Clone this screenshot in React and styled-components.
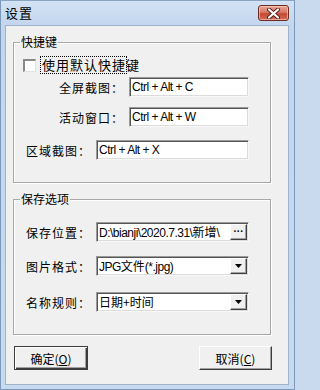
import React from "react";
import styled, { createGlobalStyle } from "styled-components";

const Global = createGlobalStyle`
  html, body { margin: 0; padding: 0; background: #c9daef; }
  #root { width: 295px; height: 390px; }
  * { box-sizing: border-box; }
`;

const CJK = `"Noto Sans CJK SC", "Noto Sans", sans-serif`;
const LATIN = `"Liberation Sans", "Noto Sans CJK SC", sans-serif`;

const Window = styled.div`
  width: 295px;
  height: 390px;
  display: flex;
  flex-direction: column;
  padding: 0 5px 4px 4px;
  background: linear-gradient(#d3e2f4 0px, #c3d6ee 24px, #c8daf0 100%);
  border: 1px solid #7c98bb;
  border-top-color: #8aa4c4;
`;

const TitleBar = styled.div`
  height: 24px;
  display: flex;
  align-items: flex-start;
  justify-content: space-between;
`;

const Title = styled.div`
  font-family: ${CJK};
  font-size: 13px;
  line-height: 13px;
  color: #000;
  padding: 5px 0 0 0;
  letter-spacing: 1px;
`;

const CloseButton = styled.div`
  width: 31px;
  height: 16px;
  margin-top: 4px;
  border: 1px solid #6b2b22;
  border-radius: 3px;
  background: linear-gradient(#e8a593 0%, #d77a66 45%, #c24a36 55%, #d46b55 100%);
  box-shadow: inset 0 0 0 1px rgba(255, 220, 210, 0.55);
  display: flex;
  align-items: center;
  justify-content: center;
`;

const Body = styled.div`
  flex: 1;
  background: #f0f0f0;
  border: 1px solid #9cb2cd;
  padding: 9px 0 0 7px;
  display: flex;
  flex-direction: column;
`;

const Group = styled.fieldset`
  margin: ${(p) => p.$mt || 0}px 0 0 0;
  width: 258px;
  min-width: 0;
  padding: 0 0 ${(p) => p.$pb}px 9px;
  border: 1px solid #a8a8a8;
  box-shadow: inset 1px 1px 0 #fff, 1px 1px 0 #fff;
  display: flex;
  flex-direction: column;
`;

const Legend = styled.legend`
  font-family: ${CJK};
  font-size: 12px;
  line-height: 14px;
  padding: 0 1px;
  margin-left: -3px;
  color: #000;
  background: #f0f0f0;
`;

const CheckRow = styled.label`
  display: flex;
  align-items: center;
  height: 16px;
  margin-top: 8px;
  font-family: ${CJK};
  font-size: 13px;
  letter-spacing: 1px;
  line-height: 16px;
  color: #000;
`;

const CheckBox = styled.span`
  width: 13px;
  height: 13px;
  background: #fff;
  border-top: 2px solid #8a8a8a;
  border-left: 2px solid #8a8a8a;
  border-right: 1px solid #e2e2e2;
  border-bottom: 1px solid #e2e2e2;
  margin-right: 5px;
  flex-shrink: 0;
`;

const Focus = styled.span`
  outline: 1px dotted #000;
  outline-offset: 0;
  padding-left: 1px;
`;

const Row = styled.div`
  display: flex;
  align-items: center;
  justify-content: flex-end;
  padding-right: 21px;
  margin-top: ${(p) => p.$mt}px;
  gap: ${(p) => p.$gap || 5}px;
`;

const Label = styled.span`
  font-family: ${CJK};
  font-size: 12px;
  letter-spacing: 1px;
  color: #000;
  white-space: nowrap;
`;

const Sunken = styled.div`
  width: ${(p) => p.$w}px;
  height: 20px;
  background: #fff;
  border-top: 1px solid #9a9a9a;
  border-left: 1px solid #9a9a9a;
  border-right: 1px solid #f8f8f8;
  border-bottom: 1px solid #f8f8f8;
  box-shadow: inset 1px 1px 0 #555, inset -1px -1px 0 #dcdcdc;
  display: flex;
  align-items: stretch;
  overflow: hidden;
`;

const FieldText = styled.div`
  flex: 1;
  min-width: 0;
  overflow: hidden;
  white-space: nowrap;
  padding: 0 0 0 2px;
  font-family: ${LATIN};
  font-size: 12px;
  letter-spacing: -0.5px;
  line-height: 18px;
  color: #000;
`;

const CjkPart = styled.span`
  font-family: ${CJK};
  letter-spacing: 0;
`;

const SideButton = styled.div`
  width: 17px;
  margin: 1px 1px 1px 0;
  background: #f0f0f0;
  border-top: 1px solid #fff;
  border-left: 1px solid #fff;
  border-right: 1px solid #404040;
  border-bottom: 1px solid #404040;
  box-shadow: inset -1px -1px 0 #a0a0a0;
  display: flex;
  align-items: center;
  justify-content: center;
  font-family: ${LATIN};
  font-size: 10px;
  font-weight: bold;
  color: #000;
  line-height: 1;
`;

const Buttons = styled.div`
  display: flex;
  justify-content: space-between;
  width: 258px;
  margin: 11px 0 0 1px;
`;

const PushButton = styled.button`
  width: ${(p) => p.$w}px;
  height: 24px;
  padding: 0;
  font-family: ${CJK};
  font-size: 12px;
  letter-spacing: 0;
  color: #000;
  background: #f0f0f0;
  border-style: solid;
  border-width: 1px;
  border-color: ${(p) => (p.$default ? "#3c3c3c" : "#fff #3c3c3c #3c3c3c #fff")};
  box-shadow: ${(p) =>
    p.$default
      ? "inset 1px 1px 0 #fff, inset -1px -1px 0 #3c3c3c, inset -2px -2px 0 #a0a0a0"
      : "inset -1px -1px 0 #a0a0a0"};
  display: flex;
  align-items: center;
  justify-content: center;
`;

const Arrow = () => (
  <svg width="7" height="4" viewBox="0 0 7 4">
    <path d="M0 0 H7 L3.5 4 Z" fill="#000" />
  </svg>
);

const CloseX = () => (
  <svg width="13" height="11" viewBox="0 0 13 11">
    <path d="M2 1.5 L11 9.5 M11 1.5 L2 9.5" stroke="#5a1c14" strokeWidth="4" strokeLinecap="round" />
    <path d="M2 1.5 L11 9.5 M11 1.5 L2 9.5" stroke="#fff" strokeWidth="2.2" strokeLinecap="round" />
  </svg>
);

export default function App() {
  return (
    <>
      <Global />
      <Window>
        <TitleBar>
          <Title>设置</Title>
          <CloseButton>
            <CloseX />
          </CloseButton>
        </TitleBar>
        <Body>
          <Group $pb={22}>
            <Legend>快捷键</Legend>
            <CheckRow>
              <CheckBox />
              <Focus>使用默认快捷</Focus>键
            </CheckRow>
            <Row $mt={4}>
              <Label>全屏截图：</Label>
              <Sunken $w={120}>
                <FieldText>Ctrl + Alt + C</FieldText>
              </Sunken>
            </Row>
            <Row $mt={10}>
              <Label>活动窗口：</Label>
              <Sunken $w={120}>
                <FieldText>Ctrl + Alt + W</FieldText>
              </Sunken>
            </Row>
            <Row $mt={13}>
              <Label>区域截图：</Label>
              <Sunken $w={153}>
                <FieldText>Ctrl + Alt + X</FieldText>
              </Sunken>
            </Row>
          </Group>
          <Group $mt={9} $pb={22}>
            <Legend>保存选项</Legend>
            <Row $mt={16}>
              <Label>保存位置：</Label>
              <Sunken $w={153}>
                <FieldText>
                  D:\bianji\2020.7.31\<CjkPart>新增</CjkPart>\
                </FieldText>
                <SideButton>···</SideButton>
              </Sunken>
            </Row>
            <Row $mt={14}>
              <Label>图片格式：</Label>
              <Sunken $w={153}>
                <FieldText>
                  JPG<CjkPart>文件</CjkPart>(*.jpg)
                </FieldText>
                <SideButton>
                  <Arrow />
                </SideButton>
              </Sunken>
            </Row>
            <Row $mt={16}>
              <Label>名称规则：</Label>
              <Sunken $w={153}>
                <FieldText>
                  <CjkPart>日期+时间</CjkPart>
                </FieldText>
                <SideButton>
                  <Arrow />
                </SideButton>
              </Sunken>
            </Row>
          </Group>
          <Buttons>
            <PushButton $w={74} $default>
              确定(<u>O</u>)
            </PushButton>
            <PushButton $w={73}>
              取消(<u>C</u>)
            </PushButton>
          </Buttons>
        </Body>
      </Window>
    </>
  );
}
